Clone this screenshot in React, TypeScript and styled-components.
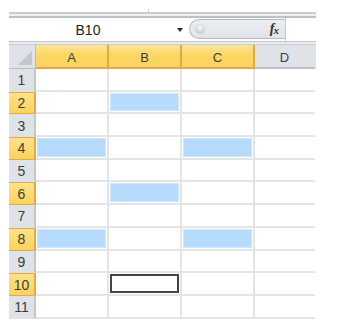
import styled, { createGlobalStyle } from 'styled-components';

const GlobalStyle = createGlobalStyle`
  body {
    margin: 0;
    background: #fff;
    font-family: "Liberation Sans", Arial, sans-serif;
  }
`;

const COLS = ['A', 'B', 'C', 'D'];
const SELECTED_COLS = ['A', 'B', 'C'];
const ROWS = [1, 2, 3, 4, 5, 6, 7, 8, 9, 10, 11];
const FILLED: Record<number, string[]> = {
  2: ['B'],
  4: ['A', 'C'],
  6: ['B'],
  8: ['A', 'C'],
};
const ACTIVE = { row: 10, col: 'B' };

const Sheet = styled.div`
  width: 307px;
  margin: 9px 0 0 9px;
`;

const Tick = styled.div`
  width: 1px;
  height: 3px;
  margin-left: 139px;
  background: #c9cdd3;
`;

const TopRule = styled.div`
  height: 6px;
  box-sizing: border-box;
  border-top: 2px solid #c9ccd2;
  border-bottom: 2px solid #bcc1c8;
  background: #eef0f2;
`;

const FormulaBar = styled.div`
  display: flex;
  height: 23px;
  background: #fff;
`;

const NameBox = styled.div`
  display: flex;
  align-items: center;
  width: 180px;
`;

const NameText = styled.span`
  width: 158px;
  text-align: center;
  font-size: 14px;
  color: #1e1e1e;
`;

const Arrow = styled.span`
  margin-left: 10px;
  width: 0;
  height: 0;
  border-left: 3.5px solid transparent;
  border-right: 3.5px solid transparent;
  border-top: 4px solid #2a2a2a;
`;

const Pill = styled.div`
  display: flex;
  align-items: center;
  justify-content: space-between;
  width: 96px;
  height: 20px;
  margin-top: 1px;
  box-sizing: border-box;
  padding: 0 7px 0 5px;
  border: 1px solid #b4b9c0;
  border-right: none;
  border-radius: 11px 0 0 11px;
  background: linear-gradient(#eceef1, #e0e3e8);
`;

const Knob = styled.span`
  width: 10px;
  height: 10px;
  border-radius: 50%;
  background: radial-gradient(circle at 50% 35%, #f4f5f7 0%, #d3d7dc 55%, #b9bec5 100%);
`;

const Fx = styled.span`
  font-family: "Liberation Serif", "Times New Roman", serif;
  font-style: italic;
  font-weight: bold;
  font-size: 14px;
  color: #333;
  letter-spacing: -1px;
  sub {
    font-size: 11px;
    vertical-align: -1px;
  }
`;

const FormulaInput = styled.div`
  flex: 1;
  height: 23px;
  border-left: 1px solid #c6cad0;
  background: #fff;
`;

const Divider = styled.div`
  height: 4px;
  box-sizing: border-box;
  border-top: 1px solid #c3c7cd;
  border-bottom: 1px solid #c9cdd3;
  background: #e9ebee;
`;

const Grid = styled.div`
  display: grid;
  grid-template-columns: 27px 73px 73px 73px 61px;
  grid-template-rows: 24px repeat(11, 22.7px);
`;

const Corner = styled.div`
  position: relative;
  box-sizing: border-box;
  background: #dfe3e8;
  border-right: 1px solid #b9bec5;
  border-bottom: 1px solid #b9bec5;
  &::after {
    content: '';
    position: absolute;
    right: 3px;
    bottom: 3px;
    width: 0;
    height: 0;
    border-left: 14px solid transparent;
    border-bottom: 14px solid #c3c7cd;
  }
`;

const ColHeader = styled.div<{ $on: boolean }>`
  display: flex;
  align-items: center;
  justify-content: center;
  box-sizing: border-box;
  padding-top: 2px;
  font-size: 13px;
  color: #3c3c3c;
  background: ${({ $on }) =>
    $on ? 'linear-gradient(#fee596, #fcd764 45%, #fbd35a)' : '#dfe3e8'};
  border-bottom: 2px solid ${({ $on }) => ($on ? '#e2a94c' : '#bfc4ca')};
  border-right: 2px solid ${({ $on }) => ($on ? '#e2a94c' : 'transparent')};
`;

const RowHeader = styled.div<{ $on: boolean }>`
  display: flex;
  align-items: center;
  justify-content: center;
  box-sizing: border-box;
  font-size: 14px;
  color: #3c3c3c;
  background: ${({ $on }) =>
    $on ? 'linear-gradient(#fee28a, #fbd35a)' : '#dfe3e8'};
  border-right: 2px solid ${({ $on }) => ($on ? '#e2a94c' : '#c1c6cc')};
  border-top: 1px solid ${({ $on }) => ($on ? '#e2a94c' : 'transparent')};
  border-bottom: 1px solid ${({ $on }) => ($on ? '#e2a94c' : 'transparent')};
`;

const Cell = styled.div<{ $last: boolean }>`
  box-sizing: border-box;
  padding: 1px;
  background: #fff;
  border-bottom: 2px solid #e3e4e5;
  border-right: 2px solid ${({ $last }) => ($last ? 'transparent' : '#e3e4e5')};
`;

const Fill = styled.div`
  height: 100%;
  box-sizing: border-box;
  background: #b7dbfd;
  border: 1px solid #cfe6fd;
`;

const Active = styled.div`
  height: 100%;
  box-sizing: border-box;
  border: 2px solid #444;
`;

export default function App() {
  return (
    <>
      <GlobalStyle />
      <Sheet>
        <Tick />
        <TopRule />
        <FormulaBar>
          <NameBox>
            <NameText>B10</NameText>
            <Arrow />
          </NameBox>
          <Pill>
            <Knob />
            <Fx>
              f<sub>x</sub>
            </Fx>
          </Pill>
          <FormulaInput />
        </FormulaBar>
        <Divider />
        <Grid>
          <Corner />
          {COLS.map((c) => (
            <ColHeader key={c} $on={SELECTED_COLS.includes(c)}>
              {c}
            </ColHeader>
          ))}
          {ROWS.map((r) => [
            <RowHeader key={`h${r}`} $on={r % 2 === 0}>
              {r}
            </RowHeader>,
            ...COLS.map((c) => (
              <Cell key={`${c}${r}`} $last={c === 'D'}>
                {FILLED[r]?.includes(c) && <Fill />}
                {ACTIVE.row === r && ACTIVE.col === c && <Active />}
              </Cell>
            )),
          ])}
        </Grid>
      </Sheet>
    </>
  );
}
